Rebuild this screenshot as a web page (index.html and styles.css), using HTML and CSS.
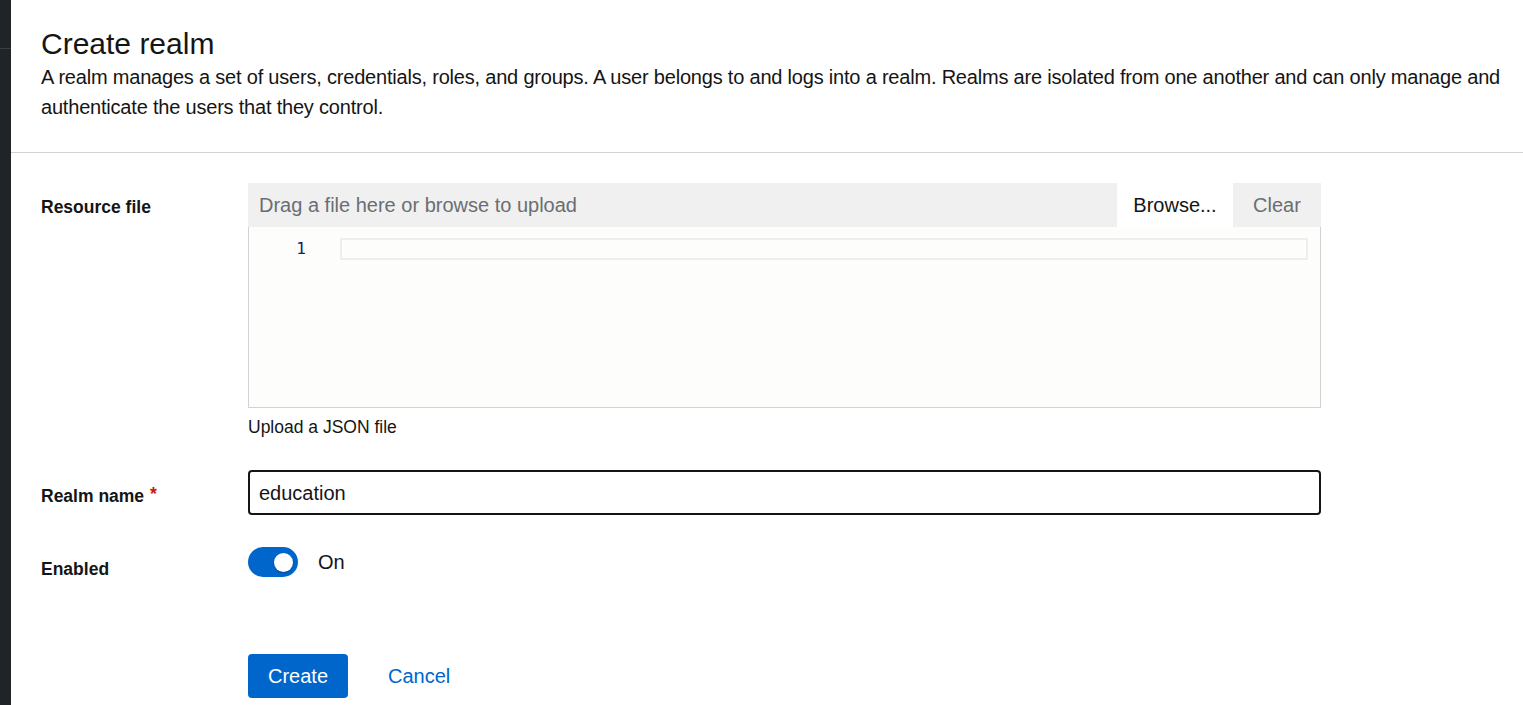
FILE: index.html
```html
<!DOCTYPE html>
<html lang="en">
<head>
<meta charset="utf-8">
<title>Create realm</title>
<link rel="stylesheet" href="styles.css">
</head>
<body>
<div class="app">
  <aside class="sidebar"><div class="sidebar-top"></div></aside>
  <main class="main">
    <section class="page-header">
      <h1 class="title">Create realm</h1>
      <p class="desc">A realm manages a set of users, credentials, roles, and groups. A user belongs to and logs into a realm. Realms are isolated from one another and can only manage and authenticate the users that they control.</p>
    </section>
    <section class="form-section">
      <form class="form">
        <div class="label-cell"><label class="label">Resource file</label></div>
        <div class="control">
          <div class="upload-bar">
            <span class="upload-placeholder">Drag a file here or browse to upload</span>
            <button type="button" class="btn-browse">Browse...</button>
            <button type="button" class="btn-clear">Clear</button>
          </div>
          <div class="editor">
            <div class="gutter"><span class="ln">1</span></div>
            <div class="code"><div class="line-hl"></div></div>
          </div>
          <div class="helper">Upload a JSON file</div>
        </div>

        <div class="label-cell"><label class="label">Realm name<span class="required">*</span></label></div>
        <div class="control">
          <input class="text-input" type="text" value="education">
        </div>

        <div class="label-cell"><label class="label">Enabled</label></div>
        <div class="control switch-row">
          <span class="switch"><span class="knob"></span></span>
          <span class="switch-label">On</span>
        </div>

        <div class="actions">
          <button type="button" class="btn-primary">Create</button>
          <button type="button" class="btn-link">Cancel</button>
        </div>
      </form>
    </section>
  </main>
</div>
</body>
</html>
```
FILE: styles.css
```css
* { box-sizing: border-box; }
html, body { margin: 0; padding: 0; }
body {
  font-family: "Liberation Sans", Arial, sans-serif;
  color: #151515;
  background: #fff;
}
.app { display: flex; min-height: 100vh; }
.sidebar { width: 11px; flex: none; background: #212427; }
.sidebar-top { height: 49px; border-bottom: 1px solid #3c3f42; }
.main { flex: 1; min-width: 0; }

.page-header {
  padding: 26px 16px 30px 30px;
  border-bottom: 1px solid #d2d2d2;
}
.title {
  margin: 0;
  font-size: 30px;
  font-weight: 400;
  line-height: 36px;
}
.desc {
  margin: 0;
  font-size: 20px;
  line-height: 30px;
  letter-spacing: -0.2px;
}

.form-section { padding: 30px 30px; }
.form {
  display: grid;
  grid-template-columns: 187px 1fr;
  column-gap: 20px;
  row-gap: 30px;
  max-width: 1280px;
}
.label-cell { padding-top: 11px; }
.label {
  font-size: 17.5px;
  font-weight: 700;
  line-height: 26px;
}
.required {
  color: #c9190b;
  margin-left: 6px;
  font-size: 17.5px;
  vertical-align: 2px;
}
.control { min-width: 0; }

.upload-bar {
  display: flex;
  align-items: stretch;
  height: 44px;
  background: #f0f0f0;
}
.upload-placeholder {
  flex: 1;
  display: flex;
  align-items: center;
  padding-left: 11px;
  padding-top: 1px;
  font-size: 20px;
  color: #6a6e73;
}
.btn-browse, .btn-clear {
  border: 0;
  font-family: inherit;
  font-size: 20px;
  padding: 1px 0 0;
}
.btn-browse { width: 116px; background: #fff; color: #151515; }
.btn-clear { width: 88px; background: #f0f0f0; color: #6a6e73; }

.editor {
  display: flex;
  height: 181px;
  border: 1px solid #d2d2d2;
  border-top: 0;
  background: #fdfdfb;
  padding-top: 11px;
}
.gutter {
  width: 60px;
  flex: none;
  text-align: right;
  padding-right: 3px;
}
.ln {
  display: block;
  height: 22px;
  line-height: 22px;
  font-family: "DejaVu Sans Mono", "Liberation Mono", monospace;
  font-size: 16px;
  color: #0b216f;
}
.code { flex: 1; padding-left: 31px; padding-right: 12px; }
.line-hl { height: 22px; border: 2px solid #eeeeee; }

.helper {
  margin-top: 6px;
  font-size: 17.5px;
  line-height: 26px;
}

.text-input {
  display: block;
  width: 100%;
  height: 45px;
  border: 2px solid #151515;
  border-radius: 4px;
  padding: 1px 9px 0;
  font-family: inherit;
  font-size: 20px;
  color: #151515;
  background: #fff;
  outline: none;
}

.switch-row {
  display: flex;
  align-items: center;
  gap: 20px;
  padding-top: 2px;
  height: 32px;
}
.switch {
  position: relative;
  width: 50px;
  height: 30px;
  border-radius: 15px;
  background: #0066cc;
  flex: none;
}
.knob {
  position: absolute;
  top: 6px;
  right: 5px;
  width: 19px;
  height: 19px;
  border-radius: 50%;
  background: #fff;
  box-shadow: 0 1px 2px rgba(0,0,0,0.3);
}
.switch-label { font-size: 20px; line-height: 30px; }

.actions {
  grid-column: 2;
  margin-top: 42px;
  display: flex;
}
.btn-primary, .btn-link {
  height: 44px;
  padding: 0 20px;
  font-family: inherit;
  font-size: 20px;
  border: 0;
  border-radius: 4px;
}
.btn-primary { background: #0066cc; color: #fff; }
.btn-link { background: transparent; color: #0066cc; margin-left: 20px; }
```
